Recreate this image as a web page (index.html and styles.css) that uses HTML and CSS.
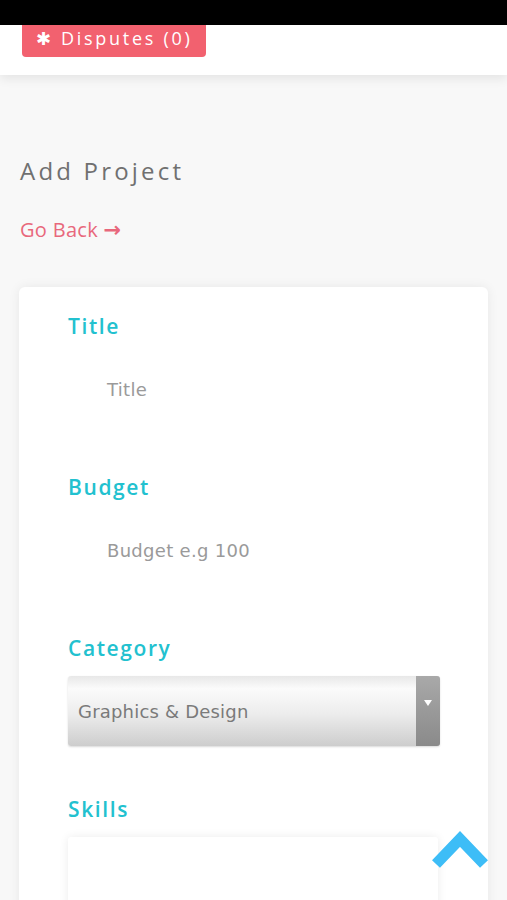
FILE: index.html
```html
<!DOCTYPE html>
<html>
<head>
<meta charset="utf-8">
<link rel="stylesheet" href="styles.css">
</head>
<body>
<div class="statusbar"></div>
<header class="topbar">
  <a class="disputes">✱ Disputes (0)</a>
</header>
<main class="page">
  <h1 class="page-title">Add Project</h1>
  <a class="go-back">Go Back <span class="arrow">→</span></a>
  <section class="card">
    <div class="field">
      <label class="label">Title</label>
      <div class="input"><span class="placeholder">Title</span></div>
    </div>
    <div class="field">
      <label class="label">Budget</label>
      <div class="input"><span class="placeholder">Budget e.g 100</span></div>
    </div>
    <div class="field">
      <label class="label">Category</label>
      <div class="select">
        <span class="select-text">Graphics &amp; Design</span>
        <span class="select-btn"><span class="tri"></span></span>
      </div>
    </div>
    <div class="field">
      <label class="label">Skills</label>
      <div class="skills-box"></div>
    </div>
  </section>
</main>
<a class="scroll-up">
  <svg width="60" height="42" viewBox="0 0 60 42"><polyline points="5,36 29,11 53,36" fill="none" stroke="#3dbdf7" stroke-width="11"/></svg>
</a>
</body>
</html>
```

FILE: styles.css
```css
html, body {
  margin: 0;
  padding: 0;
  background: #f8f8f8;
  font-family: "Open Sans", "Liberation Sans", sans-serif;
  overflow: hidden;
  height: 900px;
}
.statusbar {
  height: 25px;
  background: #000;
}
.topbar {
  height: 50px;
  background: #fff;
  box-shadow: 0 4px 10px rgba(0,0,0,0.08);
  position: relative;
  z-index: 1;
}
.disputes {
  display: inline-flex;
  align-items: center;
  margin-left: 22px;
  width: 184px;
  height: 32px;
  box-sizing: border-box;
  padding-left: 14px;
  background: #f2616f;
  color: #fff;
  border-radius: 0 0 4px 4px;
  font-size: 18px;
  letter-spacing: 2.7px;
  padding-bottom: 6px;
  white-space: nowrap;
}
.page {
  padding: 0 19px;
}
.page-title {
  margin: 80px 0 0 1px;
  font-weight: 400;
  font-size: 24px;
  line-height: 32px;
  letter-spacing: 3.2px;
  color: #707070;
}
.go-back {
  display: block;
  margin: 31px 0 0 1px;
  font-size: 20px;
  line-height: 24px;
  letter-spacing: 0.3px;
  color: #e8687c;
}
.arrow {
  font-family: "DejaVu Sans", sans-serif;
  font-size: 21px;
  font-weight: bold;
}
.card {
  margin-top: 45px;
  background: #fff;
  border-radius: 6px;
  box-shadow: 0 0 12px rgba(0,0,0,0.07);
  padding: 26px 48px 60px 49px;
}
.field {
  display: flex;
  flex-direction: column;
  gap: 15px;
  margin-bottom: 50px;
}
.label {
  font-size: 21px;
  font-weight: 600;
  line-height: 26px;
  letter-spacing: 1.6px;
  color: #22c1cf;
}
.input {
  height: 70px;
  display: flex;
  align-items: center;
  padding-left: 39px;
}
.placeholder {
  font-family: "DejaVu Sans", sans-serif;
  font-size: 18px;
  letter-spacing: 0.3px;
  color: #9a9a9a;
}
.select {
  height: 70px;
  display: flex;
  border-radius: 3px;
  background: linear-gradient(#e8e8e8 0%, #fbfbfb 18%, #ececec 55%, #cdcdcd 100%);
  box-shadow: 0 1px 2px rgba(0,0,0,0.15);
  overflow: hidden;
}
.select-text {
  flex: 1;
  display: flex;
  align-items: center;
  padding-left: 10px;
  font-family: "DejaVu Sans", sans-serif;
  font-size: 18px;
  letter-spacing: 0.2px;
  color: #7a7a7a;
}
.select-btn {
  width: 24px;
  background: linear-gradient(#a9a9a9, #8a8a8a);
  display: flex;
  justify-content: center;
  padding-top: 24px;
  box-sizing: border-box;
}
.tri {
  width: 0;
  height: 0;
  border-left: 4px solid transparent;
  border-right: 4px solid transparent;
  border-top: 6px solid #fff;
}
.skills-box {
  height: 120px;
  width: 370px;
  background: #fff;
  border-radius: 3px;
  box-shadow: 0 0 10px rgba(0,0,0,0.08);
}
.scroll-up {
  position: fixed;
  left: 431px;
  top: 828px;
}
.scroll-up svg {
  display: block;
}
```
